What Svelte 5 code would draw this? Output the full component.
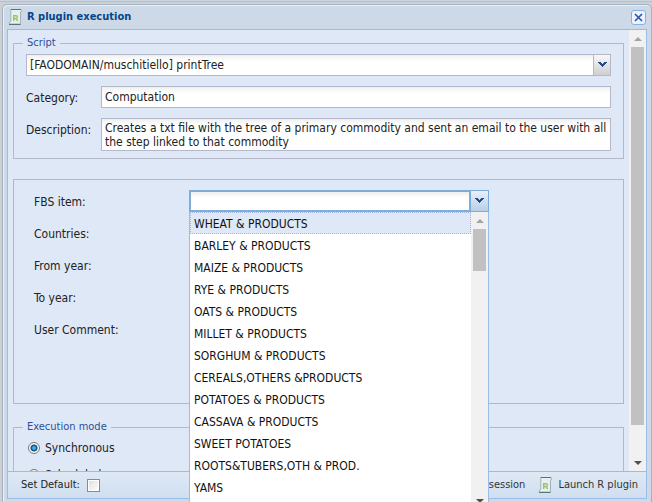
<script>
  const scripts = ['[FAODOMAIN/muschitiello] printTree'];
  const items = [
    'WHEAT & PRODUCTS', 'BARLEY & PRODUCTS', 'MAIZE & PRODUCTS', 'RYE & PRODUCTS',
    'OATS & PRODUCTS', 'MILLET & PRODUCTS', 'SORGHUM & PRODUCTS', 'CEREALS,OTHERS &PRODUCTS',
    'POTATOES & PRODUCTS', 'CASSAVA & PRODUCTS', 'SWEET POTATOES', 'ROOTS&TUBERS,OTH & PROD.', 'YAMS'
  ];
  const fields = ['Countries:', 'From year:', 'To year:', 'User Comment:'];
  let selected = $state(0);
  let fbs = $state('');
  let mode = $state('sync');
  let isDefault = $state(false);
</script>

{#snippet chevron()}
  <svg class="chevron" width="9" height="6" viewBox="0 0 9 6" aria-hidden="true" shape-rendering="crispEdges">
    <path d="M0 0h3v1h1v1h1v-1h1v-1h3v1h-1v1h-1v1h-1v1h-1v1h-1v-1h-1v-1h-1v-1h-1v-1h-1z" fill="#264a86" />
  </svg>
{/snippet}

{#snippet scroll()}
  <svg width="15" height="16" viewBox="0 0 15 16" aria-hidden="true">
    <path d="M2.500 .5h10.500l1 1.500-1.500 1v12h-11q-1-1 .5-2l.8-1v-9.500z" fill="#e6f0ee" stroke="#9fb4b6" />
    <path d="M1 15.500h11.500M3 .5h10" stroke="#54757a" fill="none" />
    <path d="M5.700 12v-5.300h2.300q1.500 0 1.500 1.400t-1.500 1.400h-2M7.800 9.500l2 2.500" stroke="#a5be6c" stroke-width="1.400" fill="none" />
  </svg>
{/snippet}

{#snippet arrow(up)}
  <svg class="arrow" width="8" height="4" viewBox="0 0 8 4" aria-hidden="true">
    {#if up}<path d="M4 0l4 4h-8z" fill="#a3a3a3" />{:else}<path d="M0 0h8l-4 4z" fill="#505050" />{/if}
  </svg>
{/snippet}

<main class="page">
  <section class="window" aria-labelledby="title">
    <header>
      {@render scroll()}
      <h1 id="title">R plugin execution</h1>
      <button class="close" aria-label="Close">
        <svg width="9" height="9" viewBox="0 0 9 9" aria-hidden="true"><path d="M1 1l7 7M8 1l-7 7" stroke="#2f50a8" stroke-width="1.600" /></svg>
      </button>
    </header>

    <div class="frame">
      <div class="body">
        <form class="content">
          <fieldset class="script">
            <legend>Script</legend>
            <div class="select">
              <select aria-label="Script">
                {#each scripts as s}<option>{s}</option>{/each}
              </select>
              <span class="trigger">{@render chevron()}</span>
            </div>
            <div class="row">
              <label for="category">Category:</label>
              <input id="category" class="box" value="Computation" />
            </div>
            <div class="row">
              <label for="description">Description:</label>
              <textarea id="description" class="box">Creates a txt file with the tree of a primary commodity and sent an email to the user with all the step linked to that commodity</textarea>
            </div>
          </fieldset>

          <fieldset class="params">
            <div class="param">
              <label for="fbs">FBS item:</label>
              <div class="combo">
                <div class="combo-head">
                  <input id="fbs" class="box" role="combobox" aria-expanded="true" aria-controls="fbs-list" bind:value={fbs} />
                  <button type="button" class="trigger" aria-label="Show items">{@render chevron()}</button>
                </div>
                <div class="dropdown">
                  <ul id="fbs-list" role="listbox" aria-label="FBS item">
                    {#each items as item, i}
                      <!-- svelte-ignore a11y_mouse_events_have_key_events -->
                      <li role="option" aria-selected={i === selected} class:selected={i === selected} onmouseover={() => (selected = i)}>{item}</li>
                    {/each}
                  </ul>
                  <div class="bar">{@render arrow(true)}<div class="thumb short"></div><span class="grow"></span>{@render arrow(false)}</div>
                </div>
              </div>
            </div>
            {#each fields as f, i}
              <div class="param">
                <label for="field-{i}">{f}</label>
                <input id="field-{i}" class="box" />
              </div>
            {/each}
          </fieldset>

          <fieldset class="mode">
            <legend>Execution mode</legend>
            <label><input type="radio" value="sync" bind:group={mode} />Synchronous</label>
            <label><input type="radio" value="sched" bind:group={mode} />Scheduled</label>
          </fieldset>
        </form>
        <div class="bar">{@render arrow(true)}<div class="thumb long"></div>{@render arrow(false)}</div>
      </div>

      <footer>
        <label>Set Default:<input type="checkbox" bind:checked={isDefault} /></label>
        <span class="grow"></span>
        <button>session</button>
        <button>{@render scroll()}Launch R plugin</button>
      </footer>
    </div>
  </section>
</main>

<style>
  :global(body) { overflow: hidden; }
  .page, .page * { box-sizing: border-box; }
  .page {
    height: 100vh;
    padding: 4px 0 0 2px;
    background: linear-gradient(#c9d6e6 0 1px, #b4bdc8 1px 2px, #d0d0d0 2px);
    font: 12px/14px "DejaVu Sans Condensed", "DejaVu Sans", sans-serif;
    color: #222;
  }
  input, select, textarea, button { font: inherit; color: inherit; margin: 0; }
  button { padding: 0; border: 0; background: none; }
  .window {
    position: relative;
    height: 100%;
    display: flex;
    flex-direction: column;
    padding: 0 4px 3px;
    border: 1px solid #a2b1c5;
    border-bottom: 0;
    border-radius: 5px 5px 0 0;
    background: #ced9e7;
    box-shadow: inset 1px 1px #e8f0fa;
  }
  header { display: flex; align-items: center; gap: 4px; height: 24px; padding-left: 1px; }
  h1 { flex: 1; margin: 0; font-size: 11px; line-height: 16px; color: #04468c; }
  .close {
    display: flex; align-items: center; justify-content: center;
    width: 15px; height: 15px; margin-right: 1px;
    border: 1px solid #86b0e8; border-radius: 3px; background: #eaf3ff;
  }
  .frame { flex: 1; min-height: 0; display: flex; flex-direction: column; border: 1px solid #99bce8; background: #dfe8f6; }
  .body { flex: 1; min-height: 0; display: flex; overflow: hidden; }
  .content { flex: 1; padding: 6px 5px 0; }
  fieldset { margin: 0; min-width: 0; border: 1px solid #b5b8c8; }
  legend { padding: 0 4px; color: #2c5099; font-size: 11px; line-height: 14px; }
  .script { padding: 4px 12px 7px; }
  .script legend { margin-left: -3px; }
  .mode legend { margin-left: -5px; }
  .box, select {
    height: 22px; padding: 0 3px; border: 1px solid #b5b8c8; border-radius: 0; outline: 0;
    background: linear-gradient(#eef0f0, #fff 6px);
  }
  .select { display: grid; margin-bottom: 10px; }
  .select > * { grid-area: 1 / 1; }
  select { appearance: none; }
  .trigger { display: flex; align-items: center; justify-content: center; width: 17px; background: linear-gradient(#f8f8f8, #cfcfcf); }
  .select .trigger { justify-self: end; width: 18px; border: 1px solid #b5b8c8; pointer-events: none; }
  .row { display: flex; margin-bottom: 10px; }
  .row:last-child { margin-bottom: 0; }
  .row label { width: 75px; padding-top: 5px; }
  .row .box { flex: 1; min-width: 0; }
  .row textarea { height: 33px; padding-top: 2px; resize: none; overflow: hidden; display: block; }
  .params { height: 225px; margin-top: 20px; padding: 10px 20px; border-color: #99bce8; }
  .param { display: flex; height: 22px; margin-bottom: 10px; }
  .param label { width: 155px; padding-top: 5px; }
  .param > .box, .combo { width: 300px; }
  .combo-head { display: flex; }
  .combo-head .box { flex: 1; min-width: 0; border: 2px solid #7eadd9; }
  .combo-head .trigger { width: 18px; border: 1px solid #7eadd9; border-left: 0; background: linear-gradient(#e6f0fb, #b8cee8); }
  .dropdown {
    position: absolute; z-index: 2; display: flex; width: 300px; height: 300px;
    border: 1px solid #99bce8; border-top: 0; background: #fff; color: #111;
  }
  ul { flex: 1; margin: 0; padding: 0; list-style: none; }
  li { height: 22px; padding: 4px 3px 2px; border: 1px dotted transparent; line-height: 14px; }
  .selected { background: #dfe8f6; border-color: #a3bae9; }
  .bar { display: flex; flex-direction: column; align-items: center; width: 17px; padding: 7px 0 6px; background: #f1f1f1; }
  .thumb { width: 13px; margin: 6px 0 36px; background: #c1c1c1; }
  .short { height: 42px; }
  .long { flex: 1; }
  .grow { flex: 1; }
  .dropdown .bar { padding-bottom: 8px; }
  .mode { margin-top: 16px; padding: 6px 14px 20px; }
  .mode label { display: flex; align-items: center; gap: 5px; height: 16px; margin-bottom: 11px; }
  input[type='radio'] {
    appearance: none; width: 12px; height: 12px; border: 1px solid #777; border-radius: 50%;
    background: #eee; box-shadow: inset 0 0 0 1px #fff;
  }
  input[type='radio']:checked { background: radial-gradient(circle at 5px 5px, #3fb9e8 0 1px, #0b4a7c 3px, #eee 4px); }
  footer {
    display: flex; align-items: center; height: 27px; padding: 0 8px 0 13px; gap: 13px;
    border-top: 1px solid #99bce8; background: linear-gradient(#dfe9f5, #d0deef); font-size: 11px;
  }
  footer label, footer button { display: flex; align-items: center; gap: 5px; }
  footer label { gap: 7px; }
  footer button { color: #333; }
  input[type='checkbox'] { appearance: none; width: 13px; height: 13px; border: 1px solid #8a8a8a; background: linear-gradient(135deg, #ddd, #fff); box-shadow: inset 0 0 0 1px #fff; }
</style>
